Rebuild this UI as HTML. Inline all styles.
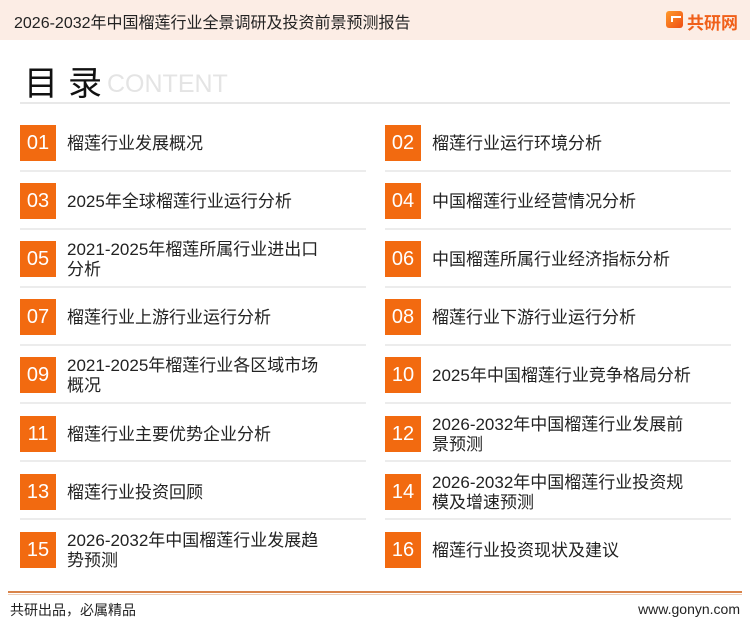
<!DOCTYPE html>
<html><head><meta charset="utf-8"><style>
*{margin:0;padding:0;box-sizing:border-box}
body{width:750px;height:622px;background:#fff;font-family:"Liberation Sans","Noto Sans CJK SC",sans-serif;position:relative;overflow:hidden;color:#222}
.hdr{position:absolute;left:0;top:0;width:750px;height:40px;background:#fcede5}
.hdr .t{position:absolute;left:14px;top:9px;font-size:16px;color:#222}
.logo{position:absolute;left:666px;top:11px;width:17px;height:17px;border-radius:3px;background:linear-gradient(135deg,#ff9a2a,#ee4d14)}
.logo:after{content:"";position:absolute;left:5px;top:5px;width:8px;height:4px;border:2px solid #fff;border-right:none;border-bottom:none}
.lt{position:absolute;left:687px;top:9px;font-size:17px;font-weight:bold;color:#f0601a}
.mt{position:absolute;left:24px;top:56px;font-size:34px;color:#111;letter-spacing:10px}
.ct{position:absolute;left:107px;top:70px;font-size:25px;color:#e4e4e4}
.hl{position:absolute;left:20px;top:102px;width:710px;height:2px;background:#e8e8e8}
.b{position:absolute;width:36px;height:36px;background:#f26a10;color:#fff;font-size:20px;text-align:center;line-height:36px}
.x{position:absolute;font-size:17px;line-height:20px;color:#222;width:268px}
.sl{position:absolute;height:2px;background:#ececec;width:346px}
.fl{position:absolute;left:8px;top:591px;width:734px;height:2px;background:#d9844a}
.fl2{position:absolute;left:8px;top:594px;width:734px;height:1px;background:#eecdb5}
.f1{position:absolute;left:10px;top:600px;font-size:14px}
.f2{position:absolute;right:10px;top:601px;font-size:14px}
</style></head><body>
<div class="hdr"><div class="t">2026-2032年中国榴莲行业全景调研及投资前景预测报告</div><div class="logo"></div><div class="lt">共研网</div></div>
<div class="mt">目录</div><div class="ct">CONTENT</div><div class="hl"></div>

<div class="b" style="left:20px;top:125px">01</div><div class="x" style="left:67px;top:134px">榴莲行业发展概况</div>
<div class="b" style="left:385px;top:125px">02</div><div class="x" style="left:432px;top:134px">榴莲行业运行环境分析</div>
<div class="sl" style="left:20px;top:170px"></div><div class="sl" style="left:385px;top:170px"></div>

<div class="b" style="left:20px;top:183px">03</div><div class="x" style="left:67px;top:192px">2025年全球榴莲行业运行分析</div>
<div class="b" style="left:385px;top:183px">04</div><div class="x" style="left:432px;top:192px">中国榴莲行业经营情况分析</div>
<div class="sl" style="left:20px;top:228px"></div><div class="sl" style="left:385px;top:228px"></div>

<div class="b" style="left:20px;top:241px">05</div><div class="x" style="left:67px;top:240px">2021-2025年榴莲所属行业进出口<br>分析</div>
<div class="b" style="left:385px;top:241px">06</div><div class="x" style="left:432px;top:250px;width:300px">中国榴莲所属行业经济指标分析</div>
<div class="sl" style="left:20px;top:286px"></div><div class="sl" style="left:385px;top:286px"></div>

<div class="b" style="left:20px;top:299px">07</div><div class="x" style="left:67px;top:308px">榴莲行业上游行业运行分析</div>
<div class="b" style="left:385px;top:299px">08</div><div class="x" style="left:432px;top:308px">榴莲行业下游行业运行分析</div>
<div class="sl" style="left:20px;top:344px"></div><div class="sl" style="left:385px;top:344px"></div>

<div class="b" style="left:20px;top:357px">09</div><div class="x" style="left:67px;top:356px">2021-2025年榴莲行业各区域市场<br>概况</div>
<div class="b" style="left:385px;top:357px">10</div><div class="x" style="left:432px;top:366px;width:300px">2025年中国榴莲行业竞争格局分析</div>
<div class="sl" style="left:20px;top:402px"></div><div class="sl" style="left:385px;top:402px"></div>

<div class="b" style="left:20px;top:416px">11</div><div class="x" style="left:67px;top:425px">榴莲行业主要优势企业分析</div>
<div class="b" style="left:385px;top:416px">12</div><div class="x" style="left:432px;top:415px">2026-2032年中国榴莲行业发展前<br>景预测</div>
<div class="sl" style="left:20px;top:460px"></div><div class="sl" style="left:385px;top:460px"></div>

<div class="b" style="left:20px;top:474px">13</div><div class="x" style="left:67px;top:483px">榴莲行业投资回顾</div>
<div class="b" style="left:385px;top:474px">14</div><div class="x" style="left:432px;top:473px">2026-2032年中国榴莲行业投资规<br>模及增速预测</div>
<div class="sl" style="left:20px;top:518px"></div><div class="sl" style="left:385px;top:518px"></div>

<div class="b" style="left:20px;top:532px">15</div><div class="x" style="left:67px;top:531px">2026-2032年中国榴莲行业发展趋<br>势预测</div>
<div class="b" style="left:385px;top:532px">16</div><div class="x" style="left:432px;top:541px">榴莲行业投资现状及建议</div>

<div class="fl"></div><div class="fl2"></div>
<div class="f1">共研出品，必属精品</div><div class="f2">www.gonyn.com</div>
</body></html>
